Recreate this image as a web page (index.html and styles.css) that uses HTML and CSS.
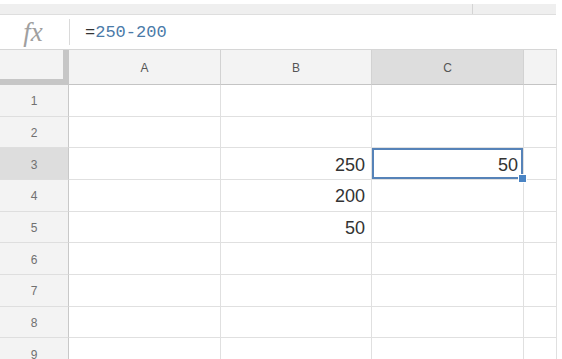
FILE: index.html
```html
<!DOCTYPE html>
<html>
<head>
<meta charset="utf-8">
<link rel="stylesheet" href="styles.css">
</head>
<body>
<div class="topbar"><div class="seg seg1"></div><div class="seg seg2"></div></div>
<div class="formulabar">
  <div class="fx">fx</div>
  <div class="sep"></div>
  <div class="formula"><span class="eq">=</span><span class="ref">250-200</span></div>
</div>
<div class="grid">
  <div class="corner"></div>
  <div class="ch">A</div>
  <div class="ch">B</div>
  <div class="ch ch-sel">C</div>
  <div class="ch ch-last"></div>

  <div class="rh">1</div><div class="c"></div><div class="c"></div><div class="c"></div><div class="c c-last"></div>
  <div class="rh">2</div><div class="c"></div><div class="c"></div><div class="c"></div><div class="c c-last"></div>
  <div class="rh rh-sel">3</div><div class="c"></div><div class="c num">250</div><div class="c num sel">50<span class="handle"></span></div><div class="c c-last"></div>
  <div class="rh">4</div><div class="c"></div><div class="c num">200</div><div class="c"></div><div class="c c-last"></div>
  <div class="rh">5</div><div class="c"></div><div class="c num">50</div><div class="c"></div><div class="c c-last"></div>
  <div class="rh">6</div><div class="c"></div><div class="c"></div><div class="c"></div><div class="c c-last"></div>
  <div class="rh">7</div><div class="c"></div><div class="c"></div><div class="c"></div><div class="c c-last"></div>
  <div class="rh">8</div><div class="c"></div><div class="c"></div><div class="c"></div><div class="c c-last"></div>
  <div class="rh">9</div><div class="c"></div><div class="c"></div><div class="c"></div><div class="c c-last"></div>
</div>
</body>
</html>
```

FILE: styles.css
```css
html, body {
  margin: 0;
  padding: 0;
  background: #ffffff;
  overflow: hidden;
  width: 562px;
  height: 359px;
  font-family: "Liberation Sans", Arial, sans-serif;
}

.topbar {
  margin-top: 4px;
  width: 556px;
  height: 10px;
  display: flex;
  background: #efefef;
  border-bottom: 1px solid #dedede;
}
.seg { height: 100%; }
.seg1 { width: 472px; border-right: 1px solid #d4d4d4; }
.seg2 { flex: 1; }

.formulabar {
  height: 34px;
  display: flex;
  align-items: center;
  width: 557px;
  border-bottom: 1px solid #d6d6d6;
}
.fx {
  width: 69px;
  text-align: center;
  font-family: "Liberation Serif", "Times New Roman", serif;
  font-style: italic;
  font-size: 27px;
  color: #a0a0a0;
  padding-right: 3px;
  box-sizing: border-box;
  line-height: 28px;
}
.sep {
  width: 1px;
  height: 26px;
  background: #dadada;
}
.formula {
  padding-left: 15px;
  font-family: "Liberation Mono", "Courier New", monospace;
  font-size: 17px;
  line-height: 20px;
  padding-top: 1px;
}
.eq { color: #333333; }
.ref { color: #4a7aa8; }

.grid {
  display: grid;
  grid-template-columns: 69px 152px 151px 152px 33px;
  grid-template-rows: 35px repeat(9, 31.67px);
  width: 557px;
}
.grid > div {
  box-sizing: border-box;
}
.corner {
  background: #f3f3f3;
  border-right: 6px solid #c6c6c6;
  border-bottom: 6px solid #c6c6c6;
}
.ch {
  background: #f3f3f3;
  border-right: 1px solid #d2d2d2;
  border-bottom: 1px solid #c4c4c4;
  display: flex;
  align-items: center;
  justify-content: center;
  font-size: 12px;
  color: #555555;
  padding-top: 1px;
}
.ch-sel { background: #dddddd; }
.ch-last { border-right: 1px solid #dcdcdc; }

.rh {
  background: #f3f3f3;
  border-right: 1px solid #c8c8c8;
  border-bottom: 1px solid #dedede;
  display: flex;
  align-items: center;
  justify-content: center;
  font-size: 12px;
  color: #707070;
  padding-top: 2px;
}
.rh-sel { background: #dddddd; }

.c {
  border-right: 1px solid #e0e0e0;
  border-bottom: 1px solid #e0e0e0;
  background: #ffffff;
}
.num {
  display: flex;
  align-items: center;
  justify-content: flex-end;
  padding-right: 6px;
  padding-top: 3px;
  font-size: 18px;
  color: #333333;
}
.sel {
  position: relative;
  box-shadow: inset 0 0 0 2px #5683b8;
  padding-right: 5px;
}
.handle {
  position: absolute;
  right: -4px;
  bottom: -4px;
  width: 7px;
  height: 7px;
  background: #4a84c4;
  border: 1px solid #ffffff;
  z-index: 2;
}
```
